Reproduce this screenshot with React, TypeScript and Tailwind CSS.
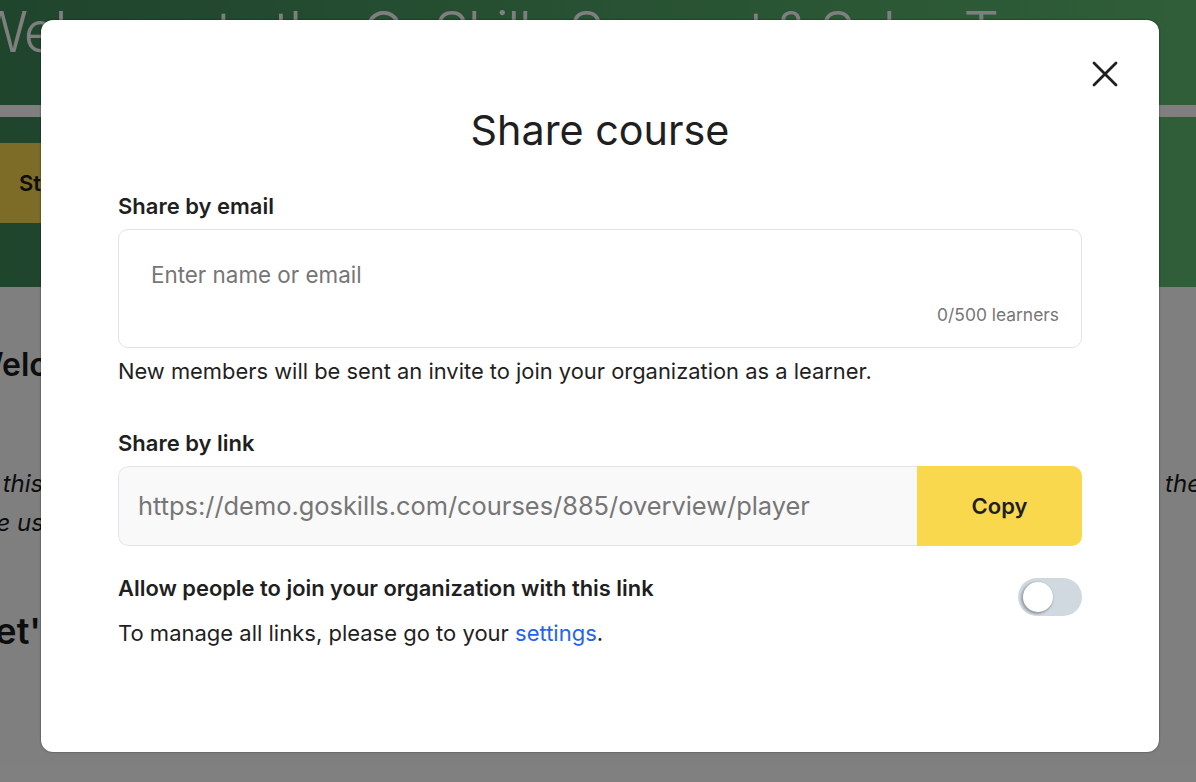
import React from "react";

function CloseIcon() {
  return (
    <svg width="28" height="28" viewBox="0 0 28 28" fill="none" stroke="#1f1f1f" strokeWidth="2.8" strokeLinecap="round">
      <path d="M3 3 25 25M25 3 3 25" />
    </svg>
  );
}

function PageBehind() {
  return (
    <div className="h-[782px] overflow-hidden bg-white text-[#1a1a1a]">
      <div className="h-[287px] overflow-hidden bg-gradient-to-r from-[#3f8a5b] to-[#60bd70]">
        <div className="h-[105px] overflow-hidden">
          <h1 className="ml-[-26px] whitespace-nowrap text-[56px] font-light leading-[64px] tracking-[-1.6px] [word-spacing:-3px] text-white">
            Welcome to the GoSkills Support &amp; Sales Team
          </h1>
        </div>
        <div className="h-3 bg-white" />
        <div className="pt-[26px]">
          <button className="ml-[-8px] flex h-20 w-[200px] items-center rounded-lg bg-[#f9d84e] pl-[27px] text-[22px] font-semibold">
            Start
          </button>
        </div>
      </div>
      <h2 className="ml-[-29px] mt-[57px] whitespace-nowrap text-[32px] font-semibold leading-[42px]">Welcome</h2>
      <div className="ml-[-32px] mt-[78px] w-[1233px] text-[24px] italic leading-[39px]">
        <div className="[text-align-last:justify]">
          In this video, we introduce the team and go through how to contact them for help with any of the
        </div>
        <div className="pl-[6px]">We use</div>
      </div>
      <h2 className="ml-[-25px] mt-[67px] whitespace-nowrap text-[36px] font-semibold leading-[44px]">Let's start</h2>
    </div>
  );
}

export default function App() {
  return (
    <div className="relative h-[782px] w-[1196px] overflow-hidden [font-family:Inter,sans-serif]">
      <PageBehind />
      <div className="absolute inset-0 bg-black/50 px-[41px] pt-5">
        <div className="relative h-[732px] w-[1118px] rounded-xl bg-white px-[77px] pt-[80px] text-[#1f1f1f] shadow-[0_0_2px_rgba(0,0,0,0.6)]">
          <button className="absolute right-[40px] top-[40px]">
            <CloseIcon />
          </button>
          <h2 className="text-center text-[41.3px] font-normal leading-[60px]">Share course</h2>

          <div className="mt-[30px] text-[22px] font-semibold leading-[32px]">Share by email</div>
          <div className="mt-[7px] flex h-[119px] flex-col justify-between rounded-[10px] border border-[#e2e2e6] pb-[20px] pl-8 pr-[22px] pt-[29px]">
            <div className="text-[22.4px] leading-[32px] text-[#767676]">Enter name or email</div>
            <div className="text-right text-[17.4px] leading-[24px] text-[#767676]">0/500 learners</div>
          </div>
          <p className="mt-[7px] text-[21.9px] leading-[32px]">
            New members will be sent an invite to join your organization as a learner.
          </p>

          <div className="mt-[40px] text-[22px] font-semibold leading-[32px]">Share by link</div>
          <div className="mt-[7px] flex h-20 overflow-hidden rounded-[10px]">
            <div className="flex flex-1 items-center rounded-l-[10px] border border-r-0 border-[#e2e3e9] bg-[#f9f9f9] pl-[19px] text-[25.4px] text-[#767676]">
              https://demo.goskills.com/courses/885/overview/player
            </div>
            <button className="w-[165px] bg-[#f9d84e] text-[22px] font-semibold">Copy</button>
          </div>

          <div className="mt-[26px] flex items-start justify-between">
            <div className="text-[21.9px] font-semibold leading-[32px]">Allow people to join your organization with this link</div>
            <div className="mt-[6px] flex h-[38px] w-16 items-center rounded-full bg-[#d0d8e0] pl-[5px]">
              <div className="h-[30px] w-[30px] rounded-full bg-white shadow-[-1px_1px_2px_1px_rgba(0,0,0,0.25)]" />
            </div>
          </div>
          <p className="mt-[1px] text-[22px] leading-[32px]">
            To manage all links, please go to your <a className="text-[#2563eb]">settings</a>.
          </p>
        </div>
      </div>
    </div>
  );
}
